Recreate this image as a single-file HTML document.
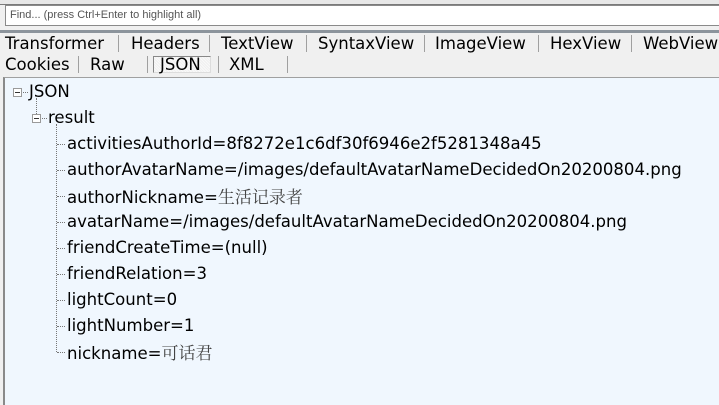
<!DOCTYPE html>
<html><head><meta charset="utf-8"><style>
*{margin:0;padding:0;box-sizing:border-box}
body{width:719px;height:405px;overflow:hidden;background:#f0f0f0;font-family:"DejaVu Sans","Noto Sans CJK SC",sans-serif;position:relative;color:#000}
.top{position:absolute;left:0;top:0;width:719px;height:5px;background:#e8e8e8;border-bottom:1px solid #7a7a7a}
.find{position:absolute;left:5px;top:5px;width:714px;height:21px;background:#fff;border:1px solid #8a8a8a;border-right:none;font-size:11px;color:#555;padding:3px 0 0 4px;font-family:"Liberation Sans",sans-serif}
.bar{position:absolute;left:0;top:30px;width:719px;height:3px;background:#8c949c}
.row{position:absolute;left:0;width:719px;overflow:hidden;font-size:16.5px;white-space:nowrap}
.row span{position:absolute;top:1px}
.sep{position:absolute;width:1px;background:#a0a0a0}
.panel{position:absolute;left:3px;top:77px;width:716px;height:328px;background:#f0f7fe;border-left:2px solid #8a8a8a;border-top:1px solid #a0a0a0}
.t{position:absolute;font-size:16.55px;white-space:nowrap;line-height:20px}
.cj{color:#444;font-family:"Noto Serif CJK SC",serif;font-size:17px}
.box{position:absolute;width:9px;height:9px;border:1px solid #9a9a9a;background:#fff}
.box:after{content:"";position:absolute;left:1px;top:3px;width:5px;height:1px;background:#333}
.dv{position:absolute;border-left:1px dotted #777;width:0}
.dh{position:absolute;border-top:1px dotted #777;height:0}
</style></head><body>
<div class="top"></div>
<div class="find">Find... (press Ctrl+Enter to highlight all)</div>
<div class="bar"></div>
<div class="row" style="top:33px;height:21px">
<span style="left:5px">Transformer</span><span style="left:131px">Headers</span><span style="left:221px">TextView</span><span style="left:318px">SyntaxView</span><span style="left:435px">ImageView</span><span style="left:550px">HexView</span><span style="left:643px">WebView</span>
</div>
<div class="sep" style="left:118px;top:35px;height:17px"></div><div class="sep" style="left:209px;top:35px;height:17px"></div><div class="sep" style="left:306px;top:35px;height:17px"></div><div class="sep" style="left:424px;top:35px;height:17px"></div><div class="sep" style="left:538px;top:35px;height:17px"></div><div class="sep" style="left:631px;top:35px;height:17px"></div>
<div style="position:absolute;left:153px;top:56px;width:58px;height:17px;border:1px solid #888;border-right-color:#ddd;border-bottom-color:#ddd;background:repeating-linear-gradient(45deg,rgba(255,255,255,.6) 0 1px,transparent 1px 2px)"></div>
<div class="row" style="top:54px;height:22px">
<span style="left:5px">Cookies</span><span style="left:90px">Raw</span><span style="left:160px">JSON</span><span style="left:229px">XML</span>
</div>
<div class="sep" style="left:78px;top:56px;height:17px"></div><div class="sep" style="left:147px;top:56px;height:17px"></div><div class="sep" style="left:218px;top:56px;height:17px"></div><div class="sep" style="left:287px;top:56px;height:17px"></div>
<div class="panel"></div>
<div class="box" style="left:13px;top:88px"></div><div class="dh" style="left:23px;top:92px;width:5px"></div>
<div class="t" style="left:29px;top:82px">JSON</div>
<div class="dv" style="left:36px;top:98px;height:16px"></div>
<div class="box" style="left:32px;top:114px"></div><div class="dh" style="left:42px;top:118px;width:5px"></div>
<div class="t" style="left:48px;top:108px">result</div>
<div class="dv" style="left:56px;top:124px;height:228px"></div>
<div class="dh" style="left:57px;top:144px;width:8px"></div><div class="t" style="left:67px;top:134px">activitiesAuthorId=8f8272e1c6df30f6946e2f5281348a45</div>
<div class="dh" style="left:57px;top:170px;width:8px"></div><div class="t" style="left:67px;top:160px">authorAvatarName=/images/defaultAvatarNameDecidedOn20200804.png</div>
<div class="dh" style="left:57px;top:196px;width:8px"></div><div class="t" style="left:67px;top:186px">authorNickname=<span class="cj">生活记录者</span></div>
<div class="dh" style="left:57px;top:222px;width:8px"></div><div class="t" style="left:67px;top:212px">avatarName=/images/defaultAvatarNameDecidedOn20200804.png</div>
<div class="dh" style="left:57px;top:248px;width:8px"></div><div class="t" style="left:67px;top:238px">friendCreateTime=(null)</div>
<div class="dh" style="left:57px;top:274px;width:8px"></div><div class="t" style="left:67px;top:264px">friendRelation=3</div>
<div class="dh" style="left:57px;top:300px;width:8px"></div><div class="t" style="left:67px;top:290px">lightCount=0</div>
<div class="dh" style="left:57px;top:326px;width:8px"></div><div class="t" style="left:67px;top:316px">lightNumber=1</div>
<div class="dh" style="left:57px;top:352px;width:8px"></div><div class="t" style="left:67px;top:342px">nickname=<span class="cj">可话君</span></div>
</body></html>
